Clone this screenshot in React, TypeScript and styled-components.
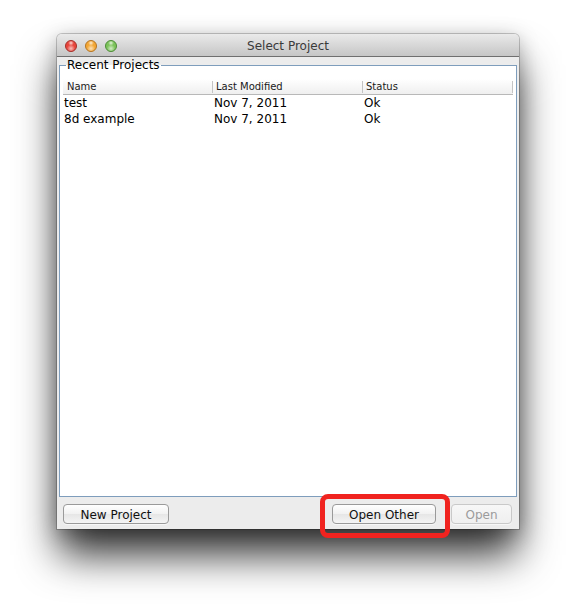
import styled, { createGlobalStyle } from 'styled-components';

const GlobalStyle = createGlobalStyle`
  html, body {
    margin: 0;
    padding: 0;
    background: #ffffff;
  }
  body {
    font-family: "DejaVu Sans", "Lucida Grande", sans-serif;
    color: #000;
  }
`;

const Page = styled.div`
  width: 576px;
  height: 609px;
  padding: 34px 0 0 57px;
  box-sizing: border-box;
  overflow: hidden;
`;

const Window = styled.div`
  position: relative;
  width: 462px;
  height: 495px;
  display: flex;
  flex-direction: column;
  background: #ececec;
  border-radius: 5px 5px 0 0;
  box-shadow: 0 0 0 1px rgba(0, 0, 0, 0.2), 0 28px 40px -2px rgba(0, 0, 0, 0.8),
    0 4px 20px rgba(0, 0, 0, 0.25);
`;

const TitleBar = styled.div`
  position: relative;
  height: 22px;
  flex: none;
  display: flex;
  align-items: center;
  justify-content: center;
  border-radius: 5px 5px 0 0;
  background: linear-gradient(#eaeaea, #d4d4d4 60%, #c6c6c6);
  border-bottom: 1px solid #6f6f6f;
`;

const Lights = styled.div`
  position: absolute;
  left: 8px;
  top: 6px;
  display: flex;
  gap: 8px;
`;

const Light = styled.span<{ $color: string; $edge: string }>`
  width: 12px;
  height: 12px;
  border-radius: 50%;
  box-sizing: border-box;
  border: 1px solid ${(p) => p.$edge};
  background: radial-gradient(circle at 50% 75%, #ffffffaa 0%, transparent 45%),
    radial-gradient(circle at 50% 20%, #ffffffcc 0%, transparent 30%),
    ${(p) => p.$color};
`;

const Title = styled.div`
  font-size: 12px;
  color: #3a3a3a;
  margin-top: 2px;
`;

const Body = styled.div`
  flex: 1;
  display: flex;
  flex-direction: column;
  padding: 1px 2px 0 2px;
  min-height: 0;
`;

const Group = styled.fieldset`
  flex: 1;
  margin: 0;
  padding: 6px 3px 0 3px;
  min-width: 0;
  border: 1px solid #7e9dbc;
  background: #ffffff;
  display: flex;
  flex-direction: column;
`;

const Legend = styled.legend`
  margin-left: 3px;
  padding: 0 1px;
  font-size: 12px;
  line-height: 15px;
`;

const Table = styled.div`
  display: flex;
  flex-direction: column;
`;

const HeaderRow = styled.div`
  display: grid;
  grid-template-columns: repeat(3, 150px);
  height: 15px;
  background: linear-gradient(#ffffff, #efefef);
  border-bottom: 1px solid #b8b8b8;
`;

const HeaderCell = styled.div<{ $first?: boolean }>`
  font-size: 10px;
  padding-left: ${(p) => (p.$first ? 4 : 3)}px;
  color: #1a1a1a;
  border-right: 1px solid #c4c4c4;
  margin: 2px 0 1px;
  line-height: 12px;
`;

const Row = styled.div`
  display: grid;
  grid-template-columns: repeat(3, 150px);
  height: 16px;
`;

const Cell = styled.div`
  font-size: 12px;
  line-height: 16px;
  padding-left: 1px;
  white-space: nowrap;
`;

const BottomBar = styled.div`
  height: 32px;
  flex: none;
  display: flex;
  align-items: flex-start;
  padding: 7px 5px 0 4px;
  box-sizing: border-box;
`;

const Spacer = styled.div`
  flex: 1;
`;

const ButtonWrap = styled.div<{ $gap?: number }>`
  position: relative;
  margin-right: ${(p) => p.$gap ?? 0}px;
`;

const Button = styled.button<{ $width: number }>`
  width: ${(p) => p.$width}px;
  height: 20px;
  padding: 0;
  font-family: "DejaVu Sans", "Lucida Grande", sans-serif;
  font-size: 12px;
  line-height: 18px;
  padding-top: 1px;
  color: #111;
  border: 1px solid #9a9a9a;
  border-radius: 4px;
  background: linear-gradient(#ffffff, #f1f1f1 50%, #e6e6e6 51%, #f4f4f4);
  box-shadow: 0 1px 0 rgba(255, 255, 255, 0.6);

  &:disabled {
    color: #9b9b9b;
    border-color: #c9c9c9;
    background: linear-gradient(#f7f7f7, #efefef);
  }
`;

const Highlight = styled.div`
  position: absolute;
  left: -12px;
  right: -14px;
  top: -10px;
  bottom: -14px;
  border: 5px solid #f0231f;
  border-radius: 8px;
  pointer-events: none;
`;

const projects = [
  { name: 'test', modified: 'Nov 7, 2011', status: 'Ok' },
  { name: '8d example', modified: 'Nov 7, 2011', status: 'Ok' },
];

export default function App() {
  return (
    <>
      <GlobalStyle />
      <Page>
        <Window>
          <TitleBar>
            <Lights>
              <Light $color="#e8453c" $edge="#a4302a" />
              <Light $color="#f3a735" $edge="#b57422" />
              <Light $color="#7cc35a" $edge="#4d8c37" />
            </Lights>
            <Title>Select Project</Title>
          </TitleBar>
          <Body>
            <Group>
              <Legend>Recent Projects</Legend>
              <Table>
                <HeaderRow>
                  <HeaderCell $first>Name</HeaderCell>
                  <HeaderCell>Last Modified</HeaderCell>
                  <HeaderCell>Status</HeaderCell>
                </HeaderRow>
                {projects.map((p) => (
                  <Row key={p.name}>
                    <Cell>{p.name}</Cell>
                    <Cell>{p.modified}</Cell>
                    <Cell>{p.status}</Cell>
                  </Row>
                ))}
              </Table>
            </Group>
            <BottomBar>
              <Button $width={106}>New Project</Button>
              <Spacer />
              <ButtonWrap $gap={15}>
                <Button $width={104}>Open Other</Button>
                <Highlight />
              </ButtonWrap>
              <Button $width={61} disabled>
                Open
              </Button>
            </BottomBar>
          </Body>
        </Window>
      </Page>
    </>
  );
}
